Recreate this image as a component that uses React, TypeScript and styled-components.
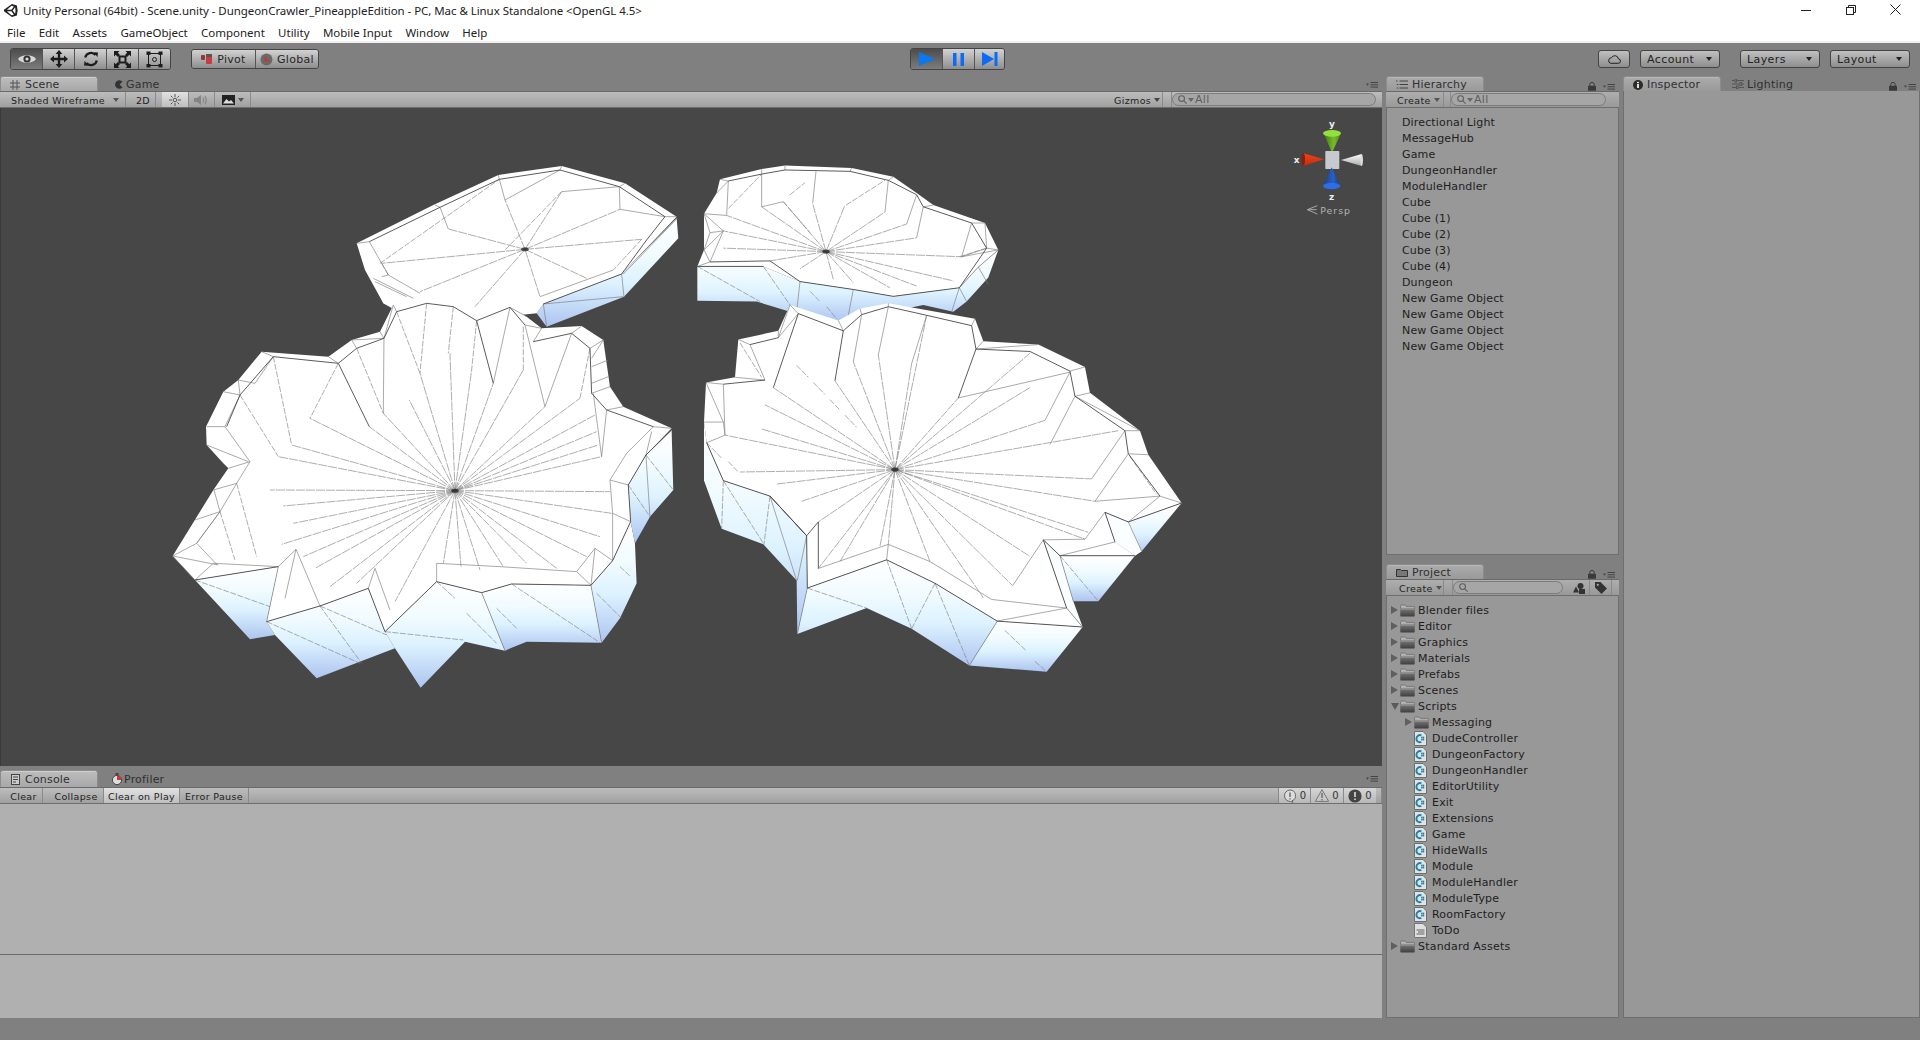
import React from "react";
import styled, { createGlobalStyle, css } from "styled-components";

const Global = createGlobalStyle`
  html, body { margin: 0; padding: 0; background: #808080; overflow: hidden; }
  #root { width: 1920px; height: 1040px; }
`;

const UI = `"DejaVu Sans", "Liberation Sans", sans-serif`;
const WIN = `"Noto Sans", "Liberation Sans", sans-serif`;

const Page = styled.div`
  width: 1920px; height: 1040px; display: flex; flex-direction: column; background: #808080; overflow: hidden;
  font-family: ${UI}; font-size: 10px; color: #222;
`;
const TitleBar = styled.div`
  height: 21px; box-sizing: border-box; background: #fff; display: flex; align-items: center; padding: 0 2px 0 3px; gap: 5px;
  font-family: ${WIN}; font-size: 11.5px; color: #222; white-space: nowrap;
`;
const TitleText = styled.span` flex: 1; letter-spacing: -0.055px; `;
const WinBtns = styled.div` display: flex; margin-top: -2px; `;
const WinBtn = styled.div` width: 45px; height: 21px; display: flex; align-items: center; justify-content: center; `;
const MenuBar = styled.div`
  height: 22px; box-sizing: border-box; background: #fff; display: flex; align-items: center; padding: 2px 0 0 7px; gap: 13.3px;
  font-family: ${WIN}; font-size: 11.5px; color: #222; border-bottom: 2px solid #f0f0f0;
`;
const MainBar = styled.div`
  height: 33px; box-sizing: border-box; display: grid; grid-template-columns: 900px 95px 1fr; align-items: start; padding: 5px 10px 0;
`;
const BarSide = styled.div<{ $end?: boolean }>`
  display: flex; gap: 20px; align-items: center; height: 22px; justify-content: ${p => (p.$end ? "flex-end" : "flex-start")};
`;
const Group = styled.div` display: flex; border: 1px solid #444; border-radius: 3px; overflow: hidden; `;
const ToolBtn = styled.div<{ $on?: boolean; $w?: number; $h?: number }>`
  width: ${p => p.$w ?? 31}px; height: ${p => p.$h ?? 20}px; box-sizing: border-box; display: flex; align-items: center; justify-content: center; gap: 4px;
  font-size: 11px; letter-spacing: .3px; color: #262626;
  background: ${p => (p.$on ? "linear-gradient(#4c4c4c,#7c7c7c)" : "linear-gradient(#d2d2d2,#8e8e8e)")};
  & + & { border-left: 1px solid #555; }
`;
const DropBtn = styled.div`
  width: 80px; height: 18px; box-sizing: border-box; border: 1px solid #444; border-radius: 3px; display: flex; align-items: center; justify-content: space-between;
  padding: 0 7px 0 6px; font-size: 11px; letter-spacing: .4px; background: linear-gradient(#c0c0c0,#8e8e8e); color: #222;
`;
const CloudBtn = styled(DropBtn)` width: 32px; padding: 0; justify-content: center; `;
const Caret = styled.span<{ $c?: string }>`
  width: 0; height: 0; border-left: 3px solid transparent; border-right: 3px solid transparent; border-top: 4px solid ${p => p.$c ?? "#222"}; display: inline-block; flex: none;
`;
const RightDrops = styled.div` display: flex; gap: 10px; align-items: center; `;

const Body = styled.div` display: flex; height: 942px; flex: none; gap: 4px; `;
const LeftCol = styled.div` width: 1382px; display: flex; flex-direction: column; `;
const MidCol = styled.div` width: 233px; display: flex; flex-direction: column; `;
const RightCol = styled.div` flex: 1; display: flex; flex-direction: column; `;

const TabRow = styled.div<{ $h?: number }>`
  height: ${p => p.$h ?? 15}px; flex: none; display: flex; align-items: flex-end; position: relative;
`;
const Tab = styled.div<{ $on?: boolean; $dim?: boolean; $pad?: number; $gap?: number }>`
  width: 98px; height: 100%; box-sizing: border-box; display: flex; align-items: center; gap: ${p => p.$gap ?? 4}px; padding: 1px 0 0 ${p => p.$pad ?? 9}px;
  font-size: 11px; letter-spacing: .2px; color: #303030; white-space: nowrap;
  ${p => p.$on && css`background: linear-gradient(#bdbdbd,#a8a8a8); border-radius: 3px 3px 0 0; border: 1px solid #8c8c8c; border-bottom: none; box-shadow: inset 0 1px 0 #cfcfcf;`}
  ${p => p.$dim && css`background: linear-gradient(#ababab,#9a9a9a); border-radius: 3px 3px 0 0; border: 1px solid #8c8c8c; border-bottom: none; box-shadow: inset 0 1px 0 #b8b8b8;`}
`;
const TabExtras = styled.div`
  position: absolute; right: 4px; top: 6px; display: flex; align-items: center; gap: 7px;
`;
const Strip = styled.div<{ $dim?: boolean }>`
  height: 17px; flex: none; box-sizing: border-box; display: flex; align-items: stretch; border-top: 1px solid #6a6a6a; border-bottom: 1px solid #6e6e6e;
  background: ${p => (p.$dim ? "linear-gradient(#aeaeae,#999)" : "linear-gradient(#bdbdbd,#a0a0a0)")}; font-size: 9.5px; letter-spacing: .35px; color: #222; white-space: nowrap;
`;
const StripBtn = styled.div<{ $w: number; $on?: boolean; $gap?: number; $between?: boolean }>`
  width: ${p => p.$w}px; box-sizing: border-box; display: flex; align-items: center; justify-content: ${p => (p.$between ? "space-between" : "center")};
  padding: ${p => (p.$between ? "1px 6px 0 6px" : "1px 0 0")}; margin-left: ${p => p.$gap ?? 0}px; flex: none;
  border-right: 1px solid #8a8a8a; gap: 3px;
  ${p => p.$on && css`background: linear-gradient(#e2e2e2,#bebebe);`}
`;
const StripSpacer = styled.div` flex: 1; `;
const Search = styled.div<{ $w: number; $m?: number }>`
  width: ${p => p.$w}px; margin: 1px ${p => p.$m ?? 0}px 1px 0; box-sizing: border-box; border: 1px solid #7c7c7c; border-radius: 8px; background: #a6a6a6;
  display: flex; align-items: center; padding-left: 5px; gap: 1px; color: #5e5e5e; font-size: 11px; flex: none;
`;

const Viewport = styled.div` height: 658px; flex: none; background: #474747; border-left: 1px solid #3a3a3a; box-sizing: border-box; `;
const SceneSvg = styled.svg` display: block; width: 1381px; height: 658px; `;
const ConsoleGap = styled.div` height: 4px; flex: none; `;
const ConsoleBody = styled.div` flex: 1; background: #b0b0b0; display: flex; flex-direction: column; `;
const ConsoleTop = styled.div` height: 150px; border-bottom: 1px solid #6a6a6a; `;
const CountBtn = styled.div<{ $w: number }>`
  width: ${p => p.$w}px; display: flex; align-items: center; justify-content: center; gap: 3px; background: linear-gradient(#d6d6d6,#b8b8b8); border-left: 1px solid #8a8a8a; font-size: 10px; color: #333; box-sizing: border-box; flex: none;
`;

const Panel = styled.div<{ $h?: number; $grow?: boolean }>`
  background: #989898; box-sizing: border-box; border-left: 1px solid #6f6f6f; border-right: 1px solid #6f6f6f; border-bottom: 1px solid #6f6f6f;
  ${p => (p.$grow ? "flex: 1;" : `height: ${p.$h}px; flex: none;`)}
`;
const PanelGap = styled.div` height: 9px; flex: none; `;
const List = styled.div<{ $top: number }>` padding-top: ${p => p.$top}px; `;
const HRow = styled.div`
  height: 16px; padding-left: 15px; display: flex; align-items: center; font-size: 11px; letter-spacing: .15px; color: #1e1e1e; white-space: nowrap;
`;
const PRow = styled.div<{ $depth: number }>`
  height: 16px; display: flex; align-items: center; padding-left: ${p => 4 + p.$depth * 14}px; font-size: 11px; letter-spacing: .2px; color: #1e1e1e; white-space: nowrap;
`;
const ArrowSlot = styled.div` width: 9px; height: 16px; display: flex; align-items: center; flex: none; `;
const Arrow = styled.span<{ $open?: boolean }>`
  display: block; width: 0; height: 0;
  ${p => p.$open
    ? "border-left: 4px solid transparent; border-right: 4px solid transparent; border-top: 7px solid #5a5a5a;"
    : "border-top: 4px solid transparent; border-bottom: 4px solid transparent; border-left: 7px solid #5f5f5f;"}
`;
const RowIcon = styled.div` width: 18px; flex: none; display: flex; align-items: center; `;
const Status = styled.div` flex: 1; background: #808080; `;

/* ---------- icons ---------- */
const Unity = () => (
  <svg width="15" height="15" viewBox="0 0 16 16"><path d="M9.5 1 14.8 2.6 15.6 8 14.8 13.4 9.5 15 1 8.8V7.2Z M9 3 4.2 7.2H9L11.6 3.6Z M9 8.8H4.2L9 13 11.6 12.4Z M10.3 8 12.9 4.6 13.4 8 12.9 11.4Z" fill="#222" fillRule="evenodd" /></svg>
);
const Ic = {
  eye: <svg width="20" height="14" viewBox="0 0 20 14"><path d="M1 7C4 2 16 2 19 7 16 12 4 12 1 7Z" fill="#d8d8d8" /><circle cx="10" cy="7" r="3.6" fill="#333" /><circle cx="10" cy="7" r="1.6" fill="#ddd" /></svg>,
  move: <svg width="18" height="18" viewBox="0 0 18 18"><path d="M9 0 12.4 4H10.2V7.8H14V5.6L18 9 14 12.4V10.2H10.2V14H12.4L9 18 5.6 14H7.8V10.2H4V12.4L0 9 4 5.6V7.8H7.8V4H5.6Z" fill="#1c1c1c" /></svg>,
  rot: <svg width="16" height="16" viewBox="0 0 16 16" fill="none" stroke="#1c1c1c" strokeWidth="2.2"><path d="M2.2 6.6A6 6 0 0 1 12.6 4M13.8 9.4A6 6 0 0 1 3.4 12" /><path d="M11 1.2 15 1.6 14.4 6.2Z M5 14.8 1 14.4 1.6 9.8Z" fill="#1c1c1c" stroke="none" /></svg>,
  scale: <svg width="17" height="17" viewBox="0 0 17 17" fill="#1c1c1c"><rect x="5.5" y="5.5" width="6" height="6" fill="none" stroke="#1c1c1c" strokeWidth="2" /><path d="M0 0H5.5L3.8 1.7 6 3.9 3.9 6 1.7 3.8 0 5.5Z M17 0V5.5L15.3 3.8 13.1 6 11 3.9 13.2 1.7 11.5 0Z M0 17V11.5L1.7 13.2 3.9 11 6 13.1 3.8 15.3 5.5 17Z M17 17H11.5L13.2 15.3 11 13.1 13.1 11 15.3 13.2 17 11.5Z" /></svg>,
  rect: <svg width="17" height="17" viewBox="0 0 17 17" fill="#1c1c1c"><path d="M3 2.5H14M3 14.5H14M2.5 3V14M14.5 3V14" stroke="#1c1c1c" strokeWidth="1" fill="none" /><rect x="0.5" y="0.5" width="4" height="3.4" /><rect x="12.5" y="0.5" width="4" height="3.4" /><rect x="0.5" y="13" width="4" height="3.4" /><rect x="12.5" y="13" width="4" height="3.4" /><circle cx="8.5" cy="8.5" r="2" fill="none" stroke="#1c1c1c" /></svg>,
  pivot: <svg width="12" height="10" viewBox="0 0 12 10"><rect x="0" y="1" width="4" height="5" rx="1" fill="#8a3a3a" /><rect x="5" y="0" width="6" height="10" rx="1" fill="#c43c40" /><rect x="5" y="0" width="6" height="3" rx="1" fill="#555" /></svg>,
  globe: <svg width="13" height="13" viewBox="0 0 13 13"><circle cx="6.5" cy="6.5" r="6" fill="#6a6a6a" /><path d="M5.4 3.4V7.6H9.6" stroke="#c33" strokeWidth="1.6" fill="none" /></svg>,
  play: <svg width="16" height="14" viewBox="0 0 16 14"><path d="M0 0 16 7 0 14Z" fill="#0a78f0" /></svg>,
  pause: <svg width="11" height="13" viewBox="0 0 11 13"><path d="M0 0H3.5V13H0ZM7.5 0H11V13H7.5Z" fill="#0a6cf4" /></svg>,
  step: <svg width="16" height="14" viewBox="0 0 16 14"><path d="M0 0 12 7 0 14Z M12.5 0H15.5V14H12.5Z" fill="#0a6cf4" /></svg>,
  cloud: <svg width="14" height="10" viewBox="0 0 14 10" fill="none" stroke="#222"><path d="M3.5 9.3H11.2A2.2 2.2 0 0 0 11.4 4.9 3.6 3.6 0 0 0 4.6 3.7 2.9 2.9 0 0 0 3.5 9.3Z" /></svg>,
  hash: <svg width="10" height="10" viewBox="0 0 10 10" stroke="#555" strokeWidth="1"><path d="M3 0V10M7 0V10M0 3H10M0 7H10" /></svg>,
  game: <svg width="9" height="9" viewBox="0 0 9 9"><path d="M8.5 1.6A4.3 4.3 0 1 0 8.5 7.4L5.6 4.5Z" fill="#333" /></svg>,
  sun: <svg width="12" height="12" viewBox="0 0 12 12" stroke="#555" strokeWidth="1"><path d="M6 0V3M6 9V12M0 6H3M9 6H12M1.8 1.8 3.6 3.6M8.4 8.4 10.2 10.2M10.2 1.8 8.4 3.6M3.6 8.4 1.8 10.2" /><circle cx="6" cy="6" r="1.8" fill="none" /></svg>,
  sound: <svg width="15" height="12" viewBox="0 0 15 12" fill="none" stroke="#848484"><path d="M0 4H3L7 1V11L3 8H0Z" fill="#848484" stroke="none" /><path d="M9 3.5Q10.5 6 9 8.5M11 2Q13.4 6 11 10" strokeWidth="1.2" /></svg>,
  img: <svg width="13" height="10" viewBox="0 0 13 10"><rect width="13" height="10" fill="#222" /><path d="M1 8.5 4.5 4 7 6.5 9 5 12 8.5Z" fill="#ddd" /></svg>,
  hier: <svg width="12" height="9" viewBox="0 0 12 9" stroke="#444"><path d="M3.5 1H12M3.5 4.5H12M3.5 8H12M0 1H1.5M0.8 4.5H2.3M0.8 8H2.3" /></svg>,
  info: <svg width="10" height="10" viewBox="0 0 10 10"><circle cx="5" cy="5" r="5" fill="#2c2c2c" /><rect x="4" y="4" width="2" height="4" fill="#ddd" /><rect x="4" y="1.8" width="2" height="1.4" fill="#ddd" /></svg>,
  light: <svg width="12" height="10" viewBox="0 0 12 10" stroke="#555"><path d="M0 1.5H12M0 5H12M0 8.5H12" /><rect x="3" y="0" width="1.6" height="3" fill="#999" /><rect x="8" y="3.5" width="1.6" height="3" fill="#999" /><rect x="4.5" y="7" width="1.6" height="3" fill="#999" /></svg>,
  lock: <svg width="8" height="9" viewBox="0 0 8 9"><path d="M1.8 4V2.6A2.2 2.2 0 0 1 6.2 2.6V4" fill="none" stroke="#3a3a3a" /><rect y="3.8" width="8" height="5" rx=".6" fill="#3a3a3a" /></svg>,
  menu: <svg width="12" height="6" viewBox="0 0 12 6"><path d="M0 1.5H3L1.5 3.8Z" fill="#444" /><path d="M4.5 .5H12M4.5 2.8H12M4.5 5.1H12" stroke="#444" /></svg>,
  profiler: <svg width="10" height="12" viewBox="0 0 10 12"><rect x="3.5" y="0" width="3" height="2" fill="#444" /><circle cx="5" cy="7" r="4.6" fill="#ddd" stroke="#444" /><path d="M5 7V2.6A4.4 4.4 0 0 1 9.4 7Z" fill="#c33" /></svg>,
  con: <svg width="9" height="11" viewBox="0 0 9 11" fill="#ccc" stroke="#444"><rect x=".5" y=".5" width="8" height="10" /><path d="M2 3H7M2 5.5H7M2 8H5" /></svg>,
  infoB: <svg width="14" height="14" viewBox="0 0 14 14" fill="none" stroke="#666"><path d="M7 1A5.6 5.6 0 0 1 9 11.8L10 13.4 7.4 12.4A5.6 5.6 0 1 1 7 1Z" fill="#ddd" /><path d="M7 3.4V8M7 9.2V10.6" strokeWidth="1.4" /></svg>,
  warn: <svg width="14" height="13" viewBox="0 0 14 13"><path d="M7 .6 13.6 12.4H.4Z" fill="#c8c8c8" stroke="#777" /><path d="M7 4V9M7 10V11.4" stroke="#666" strokeWidth="1.3" /></svg>,
  err: <svg width="14" height="14" viewBox="0 0 14 14"><circle cx="7" cy="7" r="6.6" fill="#444" /><path d="M7 3V8M7 9.4V11" stroke="#ddd" strokeWidth="1.6" /></svg>,
  folderSm: <svg width="12" height="9" viewBox="0 0 12 9" fill="#555" stroke="#333"><path d="M.5 8.5V1.5H4.5L5.5 2.5H11.5V8.5Z" fill="#777" /></svg>,
  mag: <svg width="9" height="9" viewBox="0 0 9 9" fill="none" stroke="#5e5e5e" strokeWidth="1.1"><circle cx="3.6" cy="3.6" r="2.9" /><path d="M5.8 5.8 8.6 8.6" /></svg>,
  shapes: <svg width="12" height="11" viewBox="0 0 12 11" fill="#333"><circle cx="7.5" cy="3" r="3" /><rect x="6" y="6" width="6" height="5" /><path d="M3 3.5 6 9.5H0Z" /></svg>,
  tag: <svg width="12" height="12" viewBox="0 0 12 12"><path d="M0 0H5.5L12 6.5 6.5 12 0 5.5Z" fill="#333" /><circle cx="2.8" cy="2.8" r="1.1" fill="#aaa" /></svg>,
};
const Folder = () => (
  <svg width="15" height="13" viewBox="0 0 15 13">
    <defs><linearGradient id="fg" x1="0" y1="0" x2="0" y2="1"><stop offset="0" stopColor="#7a7a7a" /><stop offset="1" stopColor="#3e3e3e" /></linearGradient></defs>
    <path d="M.5 2.2Q.5 1 1.6 1H5L6.4 2.4H13.6Q14.6 2.4 14.6 3.4V4.4H.5Z" fill="#b4b4b4" stroke="#5a5a5a" strokeWidth=".6" />
    <rect x=".3" y="4.2" width="14.4" height="8.4" rx=".8" fill="url(#fg)" />
    <path d="M.8 5H14.2" stroke="#b8b8b8" strokeWidth=".7" />
  </svg>
);
const Script = () => (
  <svg width="13" height="15" viewBox="0 0 13 15">
    <path d="M.5.5H9L12.5 4V14.5H.5Z" fill="#dfe4e8" stroke="#6e6e6e" />
    <path d="M7.4 4.4A3.6 3.6 0 1 0 7.4 11" fill="none" stroke="#1f7f9f" strokeWidth="1.9" />
    <path d="M7 6.4H10.4M7 8.6H10.4M8 5.6 7.8 9.6M9.5 5.6 9.3 9.6" stroke="#1f7f9f" strokeWidth=".8" />
  </svg>
);
const TextDoc = () => (
  <svg width="13" height="15" viewBox="0 0 13 15">
    <path d="M.5.5H9L12.5 4V14.5H.5Z" fill="#dfdfdf" stroke="#777" />
    <path d="M2.5 7H10.5M4 9H10.5M2.5 11H10.5" stroke="#444" strokeWidth=".8" />
  </svg>
);

/* ---------- mesh drawing ---------- */
type P = number[];
const s = (a: P) => { const o: string[] = []; for (let i = 0; i < a.length; i += 2) o.push(`${a[i]},${a[i + 1]}`); return o.join(" "); };
const Wire = styled.polyline<{ $kind: "rim" | "edge" | "dash" | "ray" }>`
  fill: none; vector-effect: non-scaling-stroke; stroke-linejoin: round;
  ${p => p.$kind === "rim" && "stroke:#4a4a4a; stroke-width:.9;"}
  ${p => p.$kind === "edge" && "stroke:#7c7c7c; stroke-width:.65;"}
  ${p => p.$kind === "dash" && "stroke:#808080; stroke-width:.65; stroke-dasharray:6 1.5;"}
  ${p => p.$kind === "ray" && "stroke:#777; stroke-width:.6; stroke-dasharray:9 1;"}
`;
interface MeshData {
  tf: string; top: P; faces: P[]; white?: P[]; c: [number, number]; rays: P;
  rim: P[]; edge: P[]; dash: P[];
}
const Mesh = ({ m }: { m: MeshData }) => {
  const rays: React.ReactNode[] = [];
  for (let i = 0; i < m.rays.length; i += 2) rays.push(<Wire key={i} $kind="ray" points={s([m.c[0], m.c[1], m.rays[i], m.rays[i + 1]])} />);
  return (
    <g transform={m.tf}>
      {m.faces.map((f, i) => <polygon key={i} points={s(f)} fill="url(#side)" />)}
      {(m.white ?? []).map((f, i) => <polygon key={i} points={s(f)} fill="#fbfeff" />)}
      <polygon points={s(m.top)} fill="#fff" />
      {rays}
      {m.dash.map((l, i) => <Wire key={i} $kind="dash" points={s(l)} />)}
      {m.edge.map((l, i) => <Wire key={i} $kind="edge" points={s(l)} />)}
      {m.rim.map((l, i) => <Wire key={i} $kind="rim" points={s(l)} />)}
      <ellipse cx={m.c[0]} cy={m.c[1]} rx="11" ry="6" fill="#222" opacity=".75" />
    </g>
  );
};

const meshC: MeshData = {
  tf: "translate(340,150) scale(.3333)",
  top: [50, 280, 280, 165, 475, 75, 665, 48, 855, 100, 1010, 200, 845, 372, 610, 462, 590, 490, 300, 520, 160, 475, 130, 460, 75, 360],
  faces: [[1010, 205, 1015, 265, 852, 440, 620, 530, 590, 490, 610, 462, 845, 372], [60, 310, 130, 420, 230, 440, 160, 478, 130, 460]],
  c: [555, 298],
  rays: [325, 237, 125, 340, 240, 425, 405, 470, 600, 440, 740, 385, 905, 268, 840, 178, 665, 125, 495, 150],
  rim: [[88, 275, 300, 172, 478, 88, 660, 60, 838, 110, 975, 200], [845, 372, 610, 462], [975, 200, 920, 270, 845, 372]],
  edge: [[50, 280, 88, 275, 145, 375, 240, 430], [325, 237, 300, 172], [495, 150, 478, 88], [495, 150, 660, 60], [665, 125, 838, 110, 840, 178, 975, 200], [845, 372, 852, 440], [610, 462, 620, 530], [610, 462, 850, 440], [100, 385, 220, 445], [850, 372, 1012, 205], [600, 440, 820, 360], [475, 75, 478, 88], [665, 48, 660, 60], [855, 100, 838, 110], [1010, 200, 975, 200], [285, 165, 300, 172], [125, 380, 145, 375], [105, 395, 200, 440]],
  dash: [[120, 340, 478, 88], [125, 340, 145, 375], [665, 125, 495, 300], [905, 268, 820, 360]],
};

const meshA: MeshData = {
  tf: "translate(160,300) scale(.3333)",
  top: [38, 768, 160, 570, 205, 505, 190, 490, 140, 435, 138, 380, 190, 275, 235, 240, 305, 155, 505, 170, 575, 120, 660, 95, 700, 15, 800, 5, 880, 15, 950, 40, 1050, 18, 1100, 50, 1145, 85, 1265, 78, 1330, 120, 1350, 260, 1390, 320, 1535, 385, 1458, 465, 1405, 555, 1412, 665, 1358, 782, 1293, 856, 1055, 852, 965, 878, 830, 845, 675, 995, 625, 865, 480, 918, 320, 965, 355, 800, 105, 840],
  faces: [
    [105, 840, 355, 800, 320, 965, 345, 1005, 270, 1018],
    [320, 965, 480, 918, 625, 865, 675, 995, 705, 1045, 470, 1135, 345, 1005],
    [675, 995, 830, 845, 965, 878, 1035, 1052, 915, 1025, 782, 1163, 705, 1045],
    [965, 878, 1055, 852, 1293, 856, 1325, 1028, 1100, 1025, 1035, 1052],
    [1293, 856, 1358, 782, 1412, 665, 1425, 730, 1430, 850, 1380, 955, 1325, 1028],
    [1405, 555, 1458, 465, 1535, 390, 1540, 570, 1470, 650, 1425, 730, 1412, 665],
  ],
  c: [885, 572],
  rays: [330, 570, 370, 618, 400, 670, 365, 733, 430, 770, 465, 805, 510, 860, 590, 850, 705, 905, 850, 790, 903, 800, 960, 810, 1030, 800, 1100, 790, 1190, 805, 1280, 770, 1320, 710, 1355, 640, 1350, 575, 1325, 470, 1315, 435, 1310, 395, 1305, 345, 1260, 295, 1155, 320, 1090, 210, 1000, 250, 935, 210, 870, 160, 780, 220, 748, 300, 670, 340, 628, 380, 450, 355, 395, 435, 355, 470],
  rim: [
    [105, 840, 355, 800], [320, 965, 480, 918, 625, 865, 675, 995, 830, 845, 965, 878, 1055, 852, 1293, 856, 1358, 782, 1412, 665, 1405, 555, 1458, 465, 1535, 390],
    [200, 380, 240, 285, 340, 170, 535, 190, 590, 145, 672, 115, 710, 35, 800, 10, 880, 20, 950, 62, 1050, 22, 1095, 75], [1120, 125, 1235, 100, 1290, 145, 1295, 280, 1340, 330, 1480, 380],
    [535, 190, 628, 380], [950, 62, 1000, 250],
  ],
  edge: [
    [672, 115, 670, 340], [1050, 22, 1000, 250], [1095, 75, 1155, 320], [1235, 100, 1155, 320], [965, 878, 1035, 1052], [1293, 856, 1325, 1028],
    [320, 965, 355, 800, 408, 748, 375, 895], [408, 748, 480, 918], [645, 805, 625, 865], [645, 805, 690, 930], [180, 635, 110, 730, 172, 795], [38, 768, 110, 730],
    [110, 730, 180, 635, 230, 550, 270, 485, 195, 380, 240, 285], [140, 380, 195, 380], [140, 435, 265, 485], [38, 768, 105, 840], [830, 790, 830, 845], [830, 790, 1020, 800, 1250, 815, 1293, 856],
    [1340, 330, 1325, 470], [1300, 280, 1325, 470], [1458, 465, 1470, 650], [240, 285, 235, 240, 285, 250, 340, 170], [305, 155, 340, 170], [355, 800, 160, 790, 105, 840],
    [190, 275, 240, 285], [505, 170, 535, 190], [575, 120, 590, 145], [575, 120, 672, 115], [660, 95, 672, 115], [700, 15, 710, 35], [700, 15, 672, 115], [1100, 50, 1050, 22], [1145, 85, 1095, 75], [1120, 125, 1145, 85], [1265, 78, 1235, 100],
    [1330, 120, 1290, 145], [1330, 120, 1295, 175], [1345, 180, 1295, 200], [1350, 260, 1295, 280], [1345, 230, 1295, 250], [1390, 320, 1340, 330], [1535, 385, 1480, 380],
    [1475, 395, 1458, 465], [1480, 380, 1400, 460], [1400, 460, 1350, 540], [1350, 540, 1405, 555], [1350, 540, 1358, 640, 1412, 665], [1358, 640, 1358, 782], [1305, 745, 1358, 782], [1305, 745, 1293, 856], [1305, 745, 1250, 815],
    [160, 570, 230, 550], [205, 505, 270, 485], [38, 768, 175, 795], [162, 570, 180, 635], [105, 660, 180, 635],
  ],
  dash: [
    [1290, 145, 1260, 295], [340, 170, 395, 435], [240, 285, 355, 470], [535, 190, 450, 355], [800, 10, 780, 220], [880, 20, 865, 160], [950, 62, 935, 210], [1090, 80, 1090, 210],
    [1458, 465, 1540, 570], [1405, 555, 1470, 650], [105, 840, 330, 920], [320, 965, 600, 1090], [480, 918, 605, 1090], [480, 918, 680, 1005], [675, 995, 910, 1020],
    [830, 845, 885, 895], [920, 940, 1010, 1030], [1010, 925, 1070, 985], [1055, 852, 1320, 1028], [1310, 880, 1385, 955], [1380, 800, 1412, 830], [590, 145, 670, 340], [710, 35, 780, 220], [180, 635, 225, 780], [230, 550, 290, 770],
  ],
};

const meshD: MeshData = {
  tf: "translate(690,150) scale(.3333,.3444)",
  top: [22, 338, 42, 290, 42, 185, 80, 125, 90, 85, 215, 55, 285, 45, 485, 52, 610, 78, 680, 125, 730, 160, 885, 212, 925, 290, 865, 340, 808, 400, 610, 425, 490, 405, 330, 382, 220, 338],
  faces: [[22, 338, 220, 338, 330, 382, 490, 405, 610, 425, 808, 400, 865, 340, 925, 290, 895, 370, 830, 440, 790, 470, 700, 450, 450, 500, 300, 470, 200, 440, 22, 438]],
  c: [408, 295],
  rays: [100, 285, 100, 235, 110, 190, 215, 165, 280, 150, 368, 155, 465, 160, 585, 180, 650, 215, 680, 255, 815, 310, 790, 380, 680, 395, 600, 400, 490, 385, 430, 375, 330, 345, 240, 322],
  rim: [[60, 325, 240, 322, 330, 382, 490, 405, 610, 425, 808, 400], [115, 90, 215, 70, 285, 58, 480, 62, 595, 88, 680, 130, 700, 165, 845, 212, 890, 285, 808, 400], [22, 338, 220, 338]],
  edge: [[115, 90, 110, 190], [100, 235, 60, 325], [215, 70, 215, 165, 280, 150], [378, 62, 368, 155], [595, 88, 585, 180], [700, 165, 680, 255], [845, 212, 815, 310, 925, 290], [808, 400, 830, 440], [330, 382, 320, 470], [490, 405, 475, 480], [42, 185, 100, 235, 42, 290], [80, 125, 115, 90, 90, 85], [865, 340, 895, 390], [680, 130, 650, 215], [22, 338, 60, 325],
    [42, 185, 110, 190], [215, 55, 215, 70], [285, 45, 285, 58], [485, 52, 480, 62], [610, 78, 595, 88], [730, 160, 700, 165], [885, 212, 845, 212], [885, 212, 890, 285], [925, 290, 890, 285], [42, 290, 60, 325], [42, 185, 60, 240, 100, 235], [60, 240, 42, 290], [925, 290, 865, 340, 808, 400], [890, 285, 815, 310], [808, 400, 785, 470]],
  dash: [[22, 338, 210, 440], [220, 338, 300, 450], [360, 410, 390, 440], [410, 455, 440, 490], [115, 170, 215, 70], [300, 130, 345, 95], [468, 160, 585, 88], [280, 150, 360, 240], [890, 285, 808, 310]],
};

const meshB: MeshData = {
  tf: "translate(690,150) scale(.3333,.3444)",
  top: [48, 675, 135, 660, 145, 550, 265, 525, 300, 450, 445, 495, 510, 460, 595, 445, 855, 490, 880, 555, 1045, 565, 1185, 630, 1200, 705, 1350, 815, 1375, 885, 1475, 1025, 1315, 1080, 1245, 1052, 1275, 1138, 1335, 1178, 1110, 1178, 1060, 1132, 1130, 1330, 1178, 1385, 922, 1368, 735, 1258, 590, 1190, 352, 1272, 350, 1120, 240, 1005, 100, 960, 50, 850, 42, 790],
  faces: [
    [42, 790, 50, 850, 100, 960, 240, 1005, 350, 1120, 352, 1272, 322, 1405, 320, 1250, 220, 1145, 95, 1100, 42, 960],
    [352, 1272, 590, 1190, 735, 1258, 922, 1368, 838, 1497, 665, 1390, 530, 1330, 322, 1405],
    [922, 1368, 1178, 1385, 1070, 1515, 838, 1497],
    [1110, 1178, 1335, 1178, 1225, 1310, 1150, 1310],
    [1315, 1080, 1475, 1025, 1355, 1165, 1335, 1178, 1275, 1138],
  ],
  white: [[1060, 1132, 1110, 1178, 1150, 1310, 1178, 1385, 1130, 1330], [1245, 1052, 1315, 1080, 1355, 1165, 1335, 1178, 1275, 1138]],
  c: [615, 928],
  rays: [105, 828, 150, 935, 260, 970, 335, 1020, 385, 1080, 385, 1215, 450, 1195, 570, 1150, 595, 1145, 720, 1195, 880, 1300, 968, 1265, 1020, 1180, 1185, 1130, 1195, 1110, 1215, 1020, 1205, 955, 1285, 815, 1065, 785, 1020, 690, 805, 720, 1020, 590, 665, 620, 710, 480, 565, 595, 490, 615, 435, 670, 250, 690, 215, 810, 225, 740],
  rim: [
    [50, 850, 100, 960, 240, 1005, 350, 1120, 352, 1272, 590, 1190, 735, 1258, 922, 1368, 1178, 1385], [1130, 1330, 1060, 1132, 1110, 1178, 1335, 1178], [1275, 1138, 1245, 1052, 1315, 1080, 1475, 1025],
    [100, 680, 225, 668], [180, 565, 265, 545], [325, 475, 460, 525, 515, 478, 595, 455, 710, 480, 845, 510, 858, 578, 1020, 585, 1140, 642, 1155, 715, 1305, 815, 1315, 882, 1410, 1005],
    [460, 525, 435, 670], [858, 578, 805, 720], [325, 475, 250, 690], [350, 1120, 385, 1080, 385, 1215], [240, 1005, 350, 1120],
  ],
  edge: [
    [1140, 645, 805, 720], [1140, 645, 1065, 785], [1155, 715, 1080, 855], [1305, 815, 1205, 955], [1315, 882, 1215, 1020, 1410, 1005], [968, 1265, 1060, 1132], [352, 1272, 322, 1405], [922, 1368, 838, 1497], [350, 1120, 322, 1250], [1178, 1385, 1130, 1330, 920, 1368],
    [100, 680, 105, 828], [48, 675, 100, 790, 105, 828, 50, 850], [145, 550, 180, 565, 225, 668], [240, 1005, 320, 1250], [595, 1145, 590, 1190], [595, 1145, 720, 1195, 905, 1305, 1130, 1330], [1245, 1052, 1185, 1130, 1060, 1132], [1315, 1080, 1355, 1165], [1315, 1080, 1410, 1005], [265, 545, 300, 450, 325, 475], [710, 480, 665, 620], [515, 478, 490, 615], [595, 455, 565, 595], [385, 1215, 595, 1145], [1155, 715, 1350, 815], [858, 578, 1045, 565], [845, 510, 855, 490],
    [48, 675, 100, 680], [135, 660, 225, 668], [265, 525, 265, 545], [325, 475, 265, 545], [445, 495, 460, 525], [510, 460, 515, 478], [595, 445, 595, 455], [880, 555, 858, 578], [1185, 630, 1140, 642], [1200, 705, 1155, 715], [1350, 815, 1305, 815], [1375, 885, 1315, 882], [1475, 1025, 1410, 1005], [42, 790, 100, 790], [1110, 1178, 1275, 1138], [1150, 1310, 1110, 1178],
  ],
  dash: [
    [352, 1272, 530, 1330], [590, 1190, 665, 1390], [735, 1258, 665, 1390], [735, 1258, 838, 1497], [100, 960, 222, 1145], [100, 960, 95, 1100], [240, 1005, 222, 1145], [1110, 1178, 1225, 1310], [945, 1395, 1010, 1455], [1035, 1485, 1065, 1510],
    [320, 625, 355, 660], [370, 675, 405, 710], [420, 725, 450, 755], [465, 770, 500, 805], [50, 850, 95, 895], [115, 905, 145, 935], [1320, 890, 1400, 1000], [150, 560, 215, 660],
  ],
};

const Gizmo = () => (
  <g transform="translate(1270,100) scale(.3333)">
    <defs>
      <linearGradient id="gzG" x1="0" y1="0" x2="1" y2="0"><stop offset="0" stopColor="#3f7a14" /><stop offset=".6" stopColor="#78bb2e" /><stop offset="1" stopColor="#4d8a1c" /></linearGradient>
      <linearGradient id="gzB" x1="0" y1="0" x2="1" y2="0"><stop offset="0" stopColor="#17408f" /><stop offset=".6" stopColor="#2a60c4" /><stop offset="1" stopColor="#163a85" /></linearGradient>
      <linearGradient id="gzR" x1="0" y1="0" x2="0" y2="1"><stop offset="0" stopColor="#f04418" /><stop offset="1" stopColor="#c02c10" /></linearGradient>
      <linearGradient id="gzW" x1="0" y1="0" x2="0" y2="1"><stop offset="0" stopColor="#fff" /><stop offset="1" stopColor="#aaa" /></linearGradient>
    </defs>
    <path d="M162 102 L186 158 L212 102Z" fill="url(#gzG)" />
    <ellipse cx="186" cy="100" rx="27" ry="10" fill="#93e23c" />
    <rect x="166" y="153" width="42" height="54" rx="2" fill="#c6c9ce" />
    <path d="M100 160 L162 178 L100 198Z" fill="url(#gzR)" />
    <ellipse cx="100" cy="178" rx="5" ry="19" fill="#8c1d08" />
    <path d="M275 162 L213 180 L275 198Z" fill="url(#gzW)" />
    <ellipse cx="275" cy="180" rx="4" ry="18" fill="#ddd" />
    <path d="M160 258 L185 202 L210 258Z" fill="url(#gzB)" />
    <ellipse cx="185" cy="258" rx="26" ry="10" fill="#2d6ee6" />
    <text x="186" y="80" fontFamily="DejaVu Sans" fontWeight="bold" fontSize="27" fill="#eee" textAnchor="middle">y</text>
    <text x="80" y="188" fontFamily="DejaVu Sans" fontWeight="bold" fontSize="27" fill="#eee" textAnchor="middle">x</text>
    <text x="185" y="300" fontFamily="DejaVu Sans" fontWeight="bold" fontSize="27" fill="#eee" textAnchor="middle">z</text>
    <path d="M142 317 L112 329 L142 342 M140 329 H112" stroke="#a8a8a8" strokeWidth="3" fill="none" />
    <text x="151" y="341" fontFamily="DejaVu Sans" fontSize="28" letterSpacing="3" fill="#b4b4b4">Persp</text>
  </g>
);

const SceneView = () => (
  <SceneSvg viewBox="1 108 1381 658">
    <defs>
      <linearGradient id="side" x1="0" y1="0" x2="0" y2="1">
        <stop offset="0" stopColor="#ffffff" />
        <stop offset=".32" stopColor="#f2fbff" />
        <stop offset=".6" stopColor="#dcf2ff" />
        <stop offset="1" stopColor="#adc4f0" />
      </linearGradient>
    </defs>
    <Mesh m={meshC} />
    <Mesh m={meshA} />
    <Mesh m={meshD} />
    <Mesh m={meshB} />
    <Gizmo />
  </SceneSvg>
);

const menu = ["File", "Edit", "Assets", "GameObject", "Component", "Utility", "Mobile Input", "Window", "Help"];
const hierarchy = ["Directional Light", "MessageHub", "Game", "DungeonHandler", "ModuleHandler", "Cube", "Cube (1)", "Cube (2)", "Cube (3)", "Cube (4)", "Dungeon", "New Game Object", "New Game Object", "New Game Object", "New Game Object"];
type Kind = "closed" | "open" | "script" | "text";
const project: { n: string; d: number; k: Kind }[] = [
  { n: "Blender files", d: 0, k: "closed" }, { n: "Editor", d: 0, k: "closed" }, { n: "Graphics", d: 0, k: "closed" },
  { n: "Materials", d: 0, k: "closed" }, { n: "Prefabs", d: 0, k: "closed" }, { n: "Scenes", d: 0, k: "closed" },
  { n: "Scripts", d: 0, k: "open" }, { n: "Messaging", d: 1, k: "closed" },
  ...["DudeController", "DungeonFactory", "DungeonHandler", "EditorUtility", "Exit", "Extensions", "Game", "HideWalls", "Module", "ModuleHandler", "ModuleType", "RoomFactory"].map(n => ({ n, d: 1, k: "script" as Kind })),
  { n: "ToDo", d: 1, k: "text" }, { n: "Standard Assets", d: 0, k: "closed" },
];

export default function App() {
  return (
    <Page>
      <Global />
      <TitleBar>
        <Unity />
        <TitleText>Unity Personal (64bit) - Scene.unity - DungeonCrawler_PineappleEdition - PC, Mac &amp; Linux Standalone &lt;OpenGL 4.5&gt;</TitleText>
        <WinBtns>
          <WinBtn><svg width="10" height="10" viewBox="0 0 10 10"><path d="M0 5.5H10" stroke="#222" /></svg></WinBtn>
          <WinBtn><svg width="10" height="10" viewBox="0 0 10 10" fill="none" stroke="#222"><rect x=".5" y="2.5" width="7" height="7" /><path d="M2.5 2.5V.5H9.5V7.5H7.5" /></svg></WinBtn>
          <WinBtn><svg width="11" height="11" viewBox="0 0 11 11" stroke="#222"><path d="M.5.5 10.5 10.5M10.5.5.5 10.5" /></svg></WinBtn>
        </WinBtns>
      </TitleBar>
      <MenuBar>{menu.map(m => <span key={m}>{m}</span>)}</MenuBar>
      <MainBar>
        <BarSide>
          <Group>
            <ToolBtn $on>{Ic.eye}</ToolBtn>
            <ToolBtn $w={32}>{Ic.move}</ToolBtn>
            <ToolBtn $w={32}>{Ic.rot}</ToolBtn>
            <ToolBtn $w={32}>{Ic.scale}</ToolBtn>
            <ToolBtn $w={32}>{Ic.rect}</ToolBtn>
          </Group>
          <Group>
            <ToolBtn $w={63} $h={18}>{Ic.pivot}Pivot</ToolBtn>
            <ToolBtn $w={63} $h={18}>{Ic.globe}Global</ToolBtn>
          </Group>
        </BarSide>
        <Group>
          <ToolBtn $on>{Ic.play}</ToolBtn>
          <ToolBtn $w={32}>{Ic.pause}</ToolBtn>
          <ToolBtn $w={30}>{Ic.step}</ToolBtn>
        </Group>
        <BarSide $end>
          <RightDrops>
            <CloudBtn>{Ic.cloud}</CloudBtn>
            <DropBtn>Account<Caret /></DropBtn>
          </RightDrops>
          <RightDrops>
            <DropBtn>Layers<Caret /></DropBtn>
            <DropBtn>Layout<Caret /></DropBtn>
          </RightDrops>
        </BarSide>
      </MainBar>
      <Body>
        <LeftCol>
          <TabRow>
            <Tab $on $gap={5}>{Ic.hash}Scene</Tab>
            <Tab $pad={16} $gap={3}>{Ic.game}Game</Tab>
            <TabExtras>{Ic.menu}</TabExtras>
          </TabRow>
          <Strip>
            <StripBtn $w={121} $gap={5} $between>Shaded Wireframe<Caret $c="#555" /></StripBtn>
            <StripBtn $w={25} $gap={5}>2D</StripBtn>
            <StripBtn $w={27} $gap={6} $on>{Ic.sun}</StripBtn>
            <StripBtn $w={26}>{Ic.sound}</StripBtn>
            <StripBtn $w={36}>{Ic.img}<Caret $c="#555" /></StripBtn>
            <StripSpacer />
            <StripBtn $w={55} $between>Gizmos<Caret $c="#444" /></StripBtn>
            <StripBtn $w={9} />
            <Search $w={204} $m={6}>{Ic.mag}<Caret $c="#666" />All</Search>
          </Strip>
          <Viewport><SceneView /></Viewport>
          <ConsoleGap />
          <TabRow $h={17}>
            <Tab $on $pad={10} $gap={5}>{Ic.con}Console</Tab>
            <Tab $pad={14} $gap={2}>{Ic.profiler}Profiler</Tab>
            <TabExtras>{Ic.menu}</TabExtras>
          </TabRow>
          <Strip>
            <StripBtn $w={38} $gap={5}>Clear</StripBtn>
            <StripBtn $w={55} $gap={6}>Collapse</StripBtn>
            <StripBtn $w={76} $on>Clear on Play</StripBtn>
            <StripBtn $w={69}>Error Pause</StripBtn>
            <StripSpacer />
            <CountBtn $w={32}>{Ic.infoB}0</CountBtn>
            <CountBtn $w={33}>{Ic.warn}0</CountBtn>
            <CountBtn $w={33}>{Ic.err}0</CountBtn>
            <StripBtn $w={6} />
          </Strip>
          <ConsoleBody><ConsoleTop /></ConsoleBody>
        </LeftCol>
        <MidCol>
          <TabRow>
            <Tab $dim>{Ic.hier}Hierarchy</Tab>
            <TabExtras>{Ic.lock}{Ic.menu}</TabExtras>
          </TabRow>
          <Strip $dim>
            <StripBtn $w={53} $gap={5} $between>Create<Caret $c="#555" /></StripBtn>
            <StripBtn $w={7} />
            <Search $w={155}>{Ic.mag}<Caret $c="#666" />All</Search>
          </Strip>
          <Panel $h={447}>
            <List $top={6}>{hierarchy.map((h, i) => <HRow key={i}>{h}</HRow>)}</List>
          </Panel>
          <PanelGap />
          <TabRow>
            <Tab $dim>{Ic.folderSm}Project</Tab>
            <TabExtras>{Ic.lock}{Ic.menu}</TabExtras>
          </TabRow>
          <Strip $dim>
            <StripBtn $w={51} $gap={7} $between>Create<Caret $c="#555" /></StripBtn>
            <StripBtn $w={9} />
            <Search $w={110} $m={5}>{Ic.mag}</Search>
            <StripBtn $w={22}>{Ic.shapes}</StripBtn>
            <StripBtn $w={22}>{Ic.tag}</StripBtn>
          </Strip>
          <Panel $grow>
            <List $top={6}>
              {project.map((p, i) => (
                <PRow key={i} $depth={p.d}>
                  {(p.k === "closed" || p.k === "open") && <ArrowSlot><Arrow $open={p.k === "open"} /></ArrowSlot>}
                  {p.k === "script" || p.k === "text" ? <ArrowSlot /> : null}
                  <RowIcon>{p.k === "script" ? <Script /> : p.k === "text" ? <TextDoc /> : <Folder />}</RowIcon>
                  {p.n}
                </PRow>
              ))}
            </List>
          </Panel>
        </MidCol>
        <RightCol>
          <TabRow>
            <Tab $dim>{Ic.info}Inspector</Tab>
            <Tab $pad={11} $gap={3}>{Ic.light}Lighting</Tab>
            <TabExtras>{Ic.lock}{Ic.menu}</TabExtras>
          </TabRow>
          <Panel $grow />
        </RightCol>
      </Body>
      <Status />
    </Page>
  );
}
